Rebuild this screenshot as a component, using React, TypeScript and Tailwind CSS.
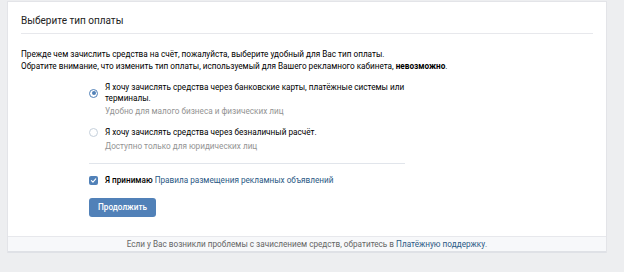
const font = { fontFamily: "Roboto, 'Open Sans', sans-serif" };

function Radio({ checked }: { checked?: boolean }) {
  return (
    <span
      className={`flex h-[9px] w-[9px] shrink-0 items-center justify-center rounded-full border bg-white ${
        checked ? "border-[#5181b8]" : "border-[#c5d0db]"
      }`}
    >
      {checked && <span className="h-[4px] w-[4px] rounded-full bg-[#5181b8]" />}
    </span>
  );
}

export default function App() {
  return (
    <div className="h-[272px] w-[624px] bg-[#edeef0] pl-[7px] pt-[1px] antialiased" style={font}>
      <div className="w-[600px] border border-b-0 border-[#e3e4e8] bg-white">
        {/* HEADER */}
        <div className="mx-[13px] flex h-[32px] items-center border-b border-[#e7e8ec] pt-[5px]">
          <h2 className="text-[10px] font-normal text-[#222]">Выберите тип оплаты</h2>
        </div>

        <div className="px-[13px] pb-[19px] pt-[14px] text-[8.2px] text-black">
          <p className="leading-[12px]">
            Прежде чем зачислить средства на счёт, пожалуйста, выберите удобный для Вас тип оплаты.
            <br />
            Обратите внимание, что изменить тип оплаты, используемый для Вашего рекламного кабинета,{" "}
            <b className="font-bold">невозможно</b>.
          </p>

          <div className="ml-[68px] w-[317px] leading-[11px]">
            {/* OPTION 1 */}
            <div className="mt-[10px] flex items-center gap-[7px]">
              <Radio checked />
              <span>
                Я хочу зачислять средства через банковские карты, платёжные системы или терминалы.
              </span>
            </div>
            <div className="mt-[2px] pl-[16px] text-[#939393]">Удобно для малого бизнеса и физических лиц</div>

            {/* OPTION 2 */}
            <div className="mt-[10px] flex items-center gap-[7px]">
              <Radio />
              <span>Я хочу зачислять средства через безналичный расчёт.</span>
            </div>
            <div className="mt-[3px] pl-[16px] text-[#939393]">Доступно только для юридических лиц</div>

            <div className="mt-[11px] h-px w-[316px] bg-[#e1e5eb]" />

            {/* AGREEMENT */}
            <div className="mt-[11px] flex items-center gap-[7px]">
              <span className="flex h-[9px] w-[9px] shrink-0 items-center justify-center rounded-[2px] bg-[#5181b8]">
                <svg viewBox="0 0 10 10" className="h-[7px] w-[7px]">
                  <path d="M2 5.2 L4.2 7.3 L8.2 2.8" fill="none" stroke="white" strokeWidth="1.6" strokeLinecap="round" strokeLinejoin="round" />
                </svg>
              </span>
              <span>
                <span className="font-medium">Я принимаю</span>{" "}
                <span className="text-[#2a5885]">Правила размещения рекламных объявлений</span>
              </span>
            </div>

            <button className="mt-[12px] h-[19px] w-[67px] rounded-[3px] bg-[#5181b8] text-[8.2px] font-medium text-white">
              Продолжить
            </button>
          </div>
        </div>

        {/* FOOTER */}
        <div className="flex h-[17px] items-center justify-center border-t border-b-2 border-t-[#e7e8ec] border-b-[#dfe1e6] bg-[#f7f8fa] text-[8.2px] text-[#656565]">
          Если у Вас возникли проблемы с зачислением средств, обратитесь в&nbsp;
          <span className="text-[#2a5885]">Платёжную поддержку</span>.
        </div>
      </div>
    </div>
  );
}
